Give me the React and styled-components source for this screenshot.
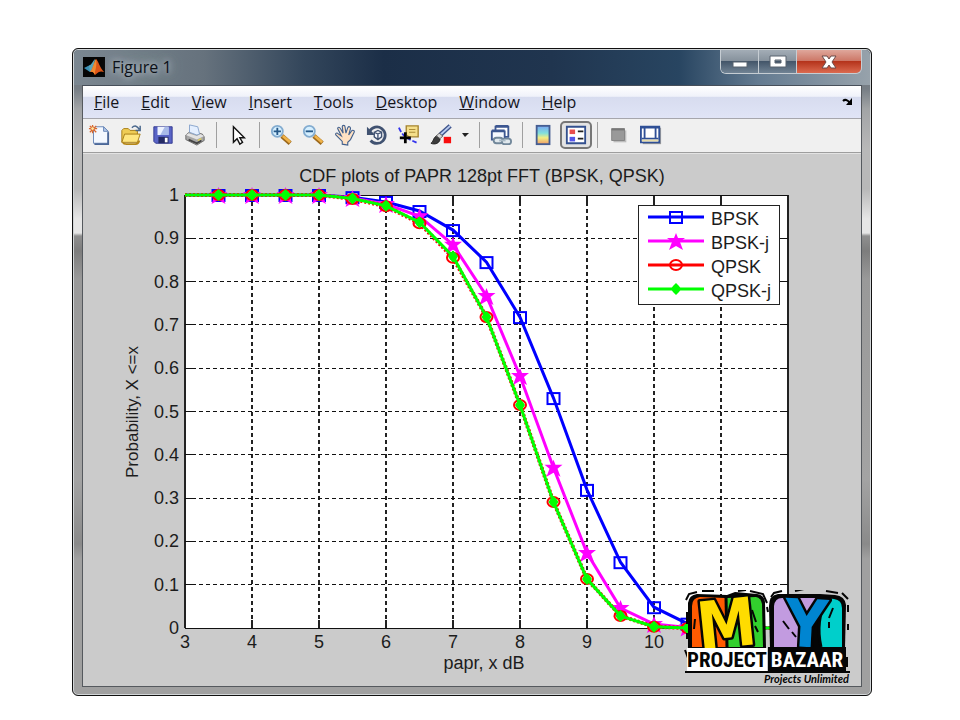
import styled, { createGlobalStyle, css } from "styled-components";

const GlobalStyle = createGlobalStyle`
  * {
    box-sizing: border-box;
  }

  body {
    margin: 0;
    background: #fff;
    font-family: "Open Sans", "Noto Sans", sans-serif;
  }
`;

const Page = styled.main`
  padding: 48px 88px 24px 72px;
`;

const Window = styled.section`
  position: relative;
  padding: 0 9px 8px;
  border: 1px solid #111;
  border-radius: 6px;
  background: linear-gradient(
    to bottom,
    #69757f 0,
    #777e85 40px,
    #a2a4a6 60px,
    #b8b8b8 100px,
    #b8b8b8 140px,
    #e6e6e6 170px,
    #e6e6e6 184px,
    #8f8f8f 187px,
    #7d7d7d 202px,
    #999 230px,
    #a3a3a3 430px,
    #8a8a8a 495px,
    #a0a0a0 510px,
    #a0a0a0 100%
  );
  box-shadow: inset 0 0 0 1px #d2d6d8;
`;

const TitleBar = styled.header`
  display: flex;
  align-items: flex-start;
  height: 35px;
  margin: 1px -8px 0;
  padding: 0 8px;
  border-radius: 5px 5px 0 0;
  background: linear-gradient(
    to right,
    #7b8791 0,
    #66727d 130px,
    #33465b 230px,
    #1b2e47 310px,
    #20354f 60%,
    #284561 76%,
    #647b91 86%,
    #97a2ab 100%
  );
`;

const Title = styled.h1`
  flex: 1;
  display: flex;
  align-items: center;
  gap: 7px;
  margin: 5px 0 0 1px;
  font-size: 16px;
  line-height: 24px;
  font-weight: 400;
  color: #0c1017;

  span {
    text-shadow: 0 0 6px #b9c2ca, 0 0 10px #aab4bc, 0 0 16px #a2acb5;
  }
`;

const Controls = styled.div`
  display: flex;
  height: 24px;
  border: 1px solid #c6cdd3;
  border-top: 0;
  border-radius: 0 0 6px 6px;
  overflow: hidden;
`;

const ControlButton = styled.button`
  display: flex;
  align-items: center;
  justify-content: center;
  width: ${({ $close }) => ($close ? "64px" : "38px")};
  padding: 0;
  border: 0;
  border-right: 1px solid #c6cdd3;
  background: linear-gradient(#a3adb6 0, #87929d 46%, #44566a 50%, #718394 100%);

  ${({ $close }) =>
    $close &&
    css`
      border-right: 0;
      background: linear-gradient(#dfa79b 0, #cd7868 46%, #b5341c 50%, #db6a50 100%);
    `}
`;

const Client = styled.div`
  border: 1px solid #55595e;
  border-top-color: #474f5a;
  background: #cbcbcb;
`;

const MenuBar = styled.nav`
  display: flex;
  align-items: center;
  gap: 22px;
  height: 33px;
  padding: 0 7px 0 11px;
  border-bottom: 1px solid #a6a6ac;
  background: linear-gradient(#fff 0, #f0f2fa 32%, #d7dcef 36%, #e0e4f6 100%);
`;

const MenuButton = styled.button`
  padding: 0;
  border: 0;
  background: none;
  font-family: inherit;
  font-size: 16px;
  line-height: 20px;
  color: #15151c;

  &::first-letter {
    text-decoration: underline;
  }
`;

const DockButton = styled.button`
  display: flex;
  margin-left: auto;
  padding: 0;
  border: 0;
  background: none;
`;

const Toolbar = styled.div`
  display: flex;
  align-items: center;
  height: 34px;
  padding-bottom: 2px;
  border-bottom: 1px solid #9e9e9e;
  background: #f0f0f0;
`;

const ToolButton = styled.button`
  display: flex;
  align-items: center;
  justify-content: center;
  width: ${({ $narrow }) => ($narrow ? "17px" : "32px")};
  height: 28px;
  padding: 0;
  border: 0;
  background: none;

  ${({ $pressed }) =>
    $pressed &&
    css`
      border: 2px solid #777;
      border-radius: 5px;
      background: #e4e4e4;
    `}
`;

const Separator = styled.span`
  width: 1px;
  height: 26px;
  margin: 0 5px;
  background: #a0a0a0;
`;

const Canvas = styled.div`
  position: relative;
  border-top: 1px solid #e3e3e3;
`;

const Chart = styled.svg`
  display: block;
  width: 100%;
  height: auto;
  font-family: "Liberation Sans", Arial, sans-serif;
  font-size: 18px;
  fill: #1c1c1c;
`;

// sits on top of the lower right corner of the plot
const Watermark = styled.svg`
  position: absolute;
  right: 9px;
  bottom: 0;
  width: 168px;
  height: 96px;
`;

const MatlabIcon = () => (
  <svg width="22" height="20" viewBox="0 0 22 20">
    <rect width="22" height="20" fill="#050505" />
    <path d="M1 11l6-3 4 4-4 3z" fill="#3b8fb3" />
    <path d="M6 9c2-1 4-5 6-7l-1 10-4 3z" fill="#5aa4b8" />
    <path d="M13 2c2 1 4 9 8 13-3-1-5-1-9 3-1-3-3-4-5-3 3-3 4-10 6-13z" fill="#dc5518" />
    <path d="M13 2c1 4 0 9-1 13v3c-1-3-3-4-5-3 3-3 4-10 6-13z" fill="#f08a30" />
  </svg>
);

const icons = {
  new: (
    <>
      <path d="M8 3h9l5 5v13H6V7z" fill="#f3f8ff" stroke="#6382b5" />
      <path d="M17 3v5h5z" fill="#b9cbea" stroke="#6382b5" />
      <path d="M22 9v13H7" fill="none" stroke="#4b6798" strokeWidth="2" />
      <path d="M5 1v9M1 5h9M2 2l7 7M9 2L2 9" stroke="#d9672d" strokeWidth="1.4" />
      <circle cx="5" cy="5" r="2" fill="#ffe8a3" stroke="#d9672d" />
    </>
  ),
  open: (
    <>
      <path d="M2 20V7l2-2h5l2 2h8v4" fill="#efcc55" stroke="#a47a13" />
      <path d="M2 20l3-9h17l-3 9z" fill="#ffe680" stroke="#a47a13" />
      <path d="M3 20q1 2 4 2h10q3 0 4-4" fill="none" stroke="#b58717" strokeWidth="2" />
      <path d="M13 4c3-3 6-2 8 2M22 2v5h-5" fill="none" stroke="#49678c" strokeWidth="1.6" />
    </>
  ),
  save: (
    <>
      <path d="M2 3h20v18H4l-2-2z" fill="#5964c6" stroke="#30388e" />
      <path d="M6 3h12v9H6z" fill="#edf2ff" />
      <path d="M14 3h4v9H9z" fill="#a9bae8" />
      <path d="M7 14h11v7H7z" fill="#252b65" />
      <path d="M14 15h3v5h-3z" fill="#fff" />
    </>
  ),
  print: (
    <>
      <path d="M2 12l5-4 13 3 2 3v4l-8 5-12-6z" fill="#a6a6a6" stroke="#696969" />
      <path d="M2 12l12 5 8-4-4-2-4 2-9-3z" fill="#e2e2e2" />
      <path d="M6 1l9 2 2 8-3 1-8-3z" fill="#e4efff" stroke="#86a2ca" />
      <path d="M5 17l9 4 5-3" fill="none" stroke="#444" strokeWidth="2" />
      <path d="M15 18l4-2" stroke="#e3d35a" strokeWidth="1.5" />
    </>
  ),
  pointer: (
    <path
      d="M7 3v17l4-4 3 6 3-2-3-5h5z"
      fill="#fff"
      stroke="#111"
      strokeWidth="1.5"
    />
  ),
  zoomIn: (
    <>
      <path d="M13 13l9 8" stroke="#9c681b" strokeWidth="5" />
      <path d="M14 13l8 7" stroke="#f0b349" strokeWidth="3" />
      <circle cx="8" cy="8" r="6" fill="#d5efff" stroke="#83acd0" strokeWidth="2" />
      <path d="M4 8h8M8 4v8" stroke="#255888" strokeWidth="2" />
    </>
  ),
  zoomOut: (
    <>
      <path d="M13 13l9 8" stroke="#9c681b" strokeWidth="5" />
      <path d="M14 13l8 7" stroke="#f0b349" strokeWidth="3" />
      <circle cx="8" cy="8" r="6" fill="#d5efff" stroke="#83acd0" strokeWidth="2" />
      <path d="M4 8h8" stroke="#255888" strokeWidth="2" />
    </>
  ),
  pan: (
    <path
      d="M9 22v-3L2 12c-1-2 1-3 3-1l3 2-4-8c0-2 2-2 3 0l3 5-1-7c0-2 3-2 3 0l1 7 2-6c1-2 3-1 3 1l-2 7 3-4c1-2 4-1 3 1l-4 8-3 3v3z"
      fill="#ffe1c2"
      stroke="#41608d"
      strokeWidth="1.2"
    />
  ),
  rotate: (
    <>
      <path d="M4 8a9 9 0 1 1 1 10" fill="none" stroke="#405271" strokeWidth="3" />
      <path d="M1 3v9h9z" fill="#405271" />
      <path d="M9 9l4-2 4 2v5l-4 3-4-3zM9 9l4 2 4-2M13 11v6" fill="#f5f8ff" stroke="#405271" strokeWidth="1.5" />
    </>
  ),
  datatip: (
    <>
      <path d="M1 4q2 5 5 8t9 6l7 3" fill="none" stroke="#3434ed" strokeWidth="2" strokeDasharray="5 2" />
      <path d="M9 2h13v12H12l-3-2z" fill="#f5df8a" stroke="#a58431" strokeWidth="1.5" />
      <path d="M12 6h7M12 9h7" stroke="#a58431" />
      <path d="M8 9v12M2 15h12" stroke="#000" strokeWidth="3" />
    </>
  ),
  brush: (
    <>
      <path d="M22 2L11 12" stroke="#3e538a" strokeWidth="5" />
      <path d="M22 2L11 12" stroke="#b9cbef" strokeWidth="2" />
      <path d="M1 21c3-1 2-6 6-8l4 3c0 5-6 7-10 5z" fill="#3c3c3c" stroke="#222" />
      <path d="M7 13l3-3 4 3-3 3z" fill="#d8d8d8" stroke="#555" />
      <path d="M15 14h8v7h-8z" fill="#f80d0d" />
    </>
  ),
  link: (
    <>
      <path d="M6 3h14v11H6z" fill="#fff" stroke="#3d5791" strokeWidth="2" />
      <path d="M2 8h14v9H2z" fill="#f5f8ff" stroke="#3d5791" strokeWidth="2" />
      <path d="M2 7h14M6 2h14" stroke="#3d5791" strokeWidth="2" />
      <rect x="4" y="15" width="10" height="6" rx="3" fill="#e1e9ee" stroke="#71879a" strokeWidth="2" />
      <rect x="13" y="16" width="10" height="6" rx="3" fill="#e1e9ee" stroke="#71879a" strokeWidth="2" />
      <path d="M10 18h7" stroke="#a9bac6" strokeWidth="2" />
    </>
  ),
  colorbar: (
    <>
      <defs>
        <linearGradient id="spectrum" x2="0" y2="1">
          <stop offset="0" stopColor="#79a5f3" />
          <stop offset=".4" stopColor="#81e0dc" />
          <stop offset=".65" stopColor="#f3ee82" />
          <stop offset="1" stopColor="#ef9b68" />
        </linearGradient>
      </defs>
      <rect x="4" y="2" width="14" height="20" fill="url(#spectrum)" stroke="#455d91" strokeWidth="2" />
    </>
  ),
  legend: (
    <>
      <path d="M2 3h20v18H2z" fill="#fff" stroke="#33508f" strokeWidth="2" />
      <path d="M5 6h6v5H5z" fill="#e84e4e" />
      <path d="M5 14h6v5H5z" fill="#5555e8" />
      <path d="M14 8h6M14 16h6" stroke="#222" strokeWidth="2" />
    </>
  ),
  hideTools: (
    <>
      <path d="M6 7h14v13H6z" fill="#bdbdbd" />
      <path d="M4 5h14v13H4z" fill="#999" stroke="#828282" />
      <path d="M4 6h14" stroke="#777" strokeWidth="2" />
    </>
  ),
  showTools: (
    <>
      <path d="M3 4h20v18H3z" fill="#9b9b9b" />
      <path d="M1 3h20v17H1z" fill="#fff" stroke="#2f4f96" strokeWidth="2" />
      <path d="M1 4h20M5 5v11M17 5v11M2 16h18" stroke="#2f4f96" strokeWidth="2" />
      <path d="M2 18h18" stroke="#e8dca8" strokeWidth="2" />
    </>
  ),
};

const ToolIcon = ({ name }) => (
  <svg width="22" height="22" viewBox="0 0 24 24">
    {icons[name]}
  </svg>
);

const menus = ["File", "Edit", "View", "Insert", "Tools", "Desktop", "Window", "Help"];

// groups are divided by a separator
const toolGroups = [
  [
    ["new", "New Figure"],
    ["open", "Open File"],
    ["save", "Save Figure"],
    ["print", "Print Figure"],
  ],
  [["pointer", "Edit Plot"]],
  [
    ["zoomIn", "Zoom In"],
    ["zoomOut", "Zoom Out"],
    ["pan", "Pan"],
    ["rotate", "Rotate 3D"],
    ["datatip", "Data Cursor"],
    ["brush", "Brush"],
  ],
  [["link", "Link Plot"]],
  [
    ["colorbar", "Insert Colorbar"],
    ["legend", "Insert Legend"],
  ],
  [
    ["hideTools", "Hide Plot Tools"],
    ["showTools", "Show Plot Tools"],
  ],
];

// plot area inside the 778 x 532 canvas
const LEFT = 102;
const TOP = 41;
const RIGHT = 705;
const BOTTOM = 474;

const toX = (v) => LEFT + ((v - 3) * (RIGHT - LEFT)) / 9;
const toY = (v) => BOTTOM - v * (BOTTOM - TOP);

const series = [
  {
    name: "BPSK",
    color: "#0000ff",
    marker: "square",
    values: [1, 1, 1, 1, 1, 0.995, 0.984, 0.963, 0.919, 0.845, 0.718, 0.531, 0.319, 0.152, 0.048, 0.01, 0.002, 0, 0],
  },
  {
    name: "BPSK-j",
    color: "#ff00ff",
    marker: "star",
    values: [1, 1, 1, 1, 1, 0.993, 0.979, 0.951, 0.885, 0.767, 0.582, 0.37, 0.173, 0.046, 0.009, 0.001, 0, 0, 0],
  },
  {
    name: "QPSK",
    color: "#ff0000",
    marker: "circle",
    values: [1, 1, 1, 1, 1, 0.991, 0.974, 0.935, 0.855, 0.718, 0.515, 0.291, 0.113, 0.028, 0.003, 0, 0, 0, 0],
  },
  {
    name: "QPSK-j",
    color: "#00ff00",
    marker: "diamond",
    values: [1, 1, 1, 1, 1, 0.992, 0.975, 0.937, 0.858, 0.718, 0.515, 0.291, 0.113, 0.028, 0.003, 0, 0, 0, 0],
  },
];

const Marker = ({ type, x, y, color }) => {
  if (type === "square") {
    return <rect x={x - 6} y={y - 5} width="12" height="11" fill="none" stroke={color} strokeWidth="2" />;
  }
  if (type === "circle") {
    return <ellipse cx={x} cy={y} rx="6" ry="5" fill="none" stroke={color} strokeWidth="2" />;
  }
  if (type === "star") {
    return (
      <path
        d={`M${x} ${y - 8}l2 5h7l-5 4 3 8-7-4-7 4 3-8-5-4h7z`}
        fill={color}
      />
    );
  }
  return <path d={`M${x} ${y - 6}l3 3 2 3-2 3-3 3-3-3-2-3 2-3z`} fill={color} />;
};

const Plot = () => {
  const xTicks = [3, 4, 5, 6, 7, 8, 9, 10, 11, 12];
  const yTicks = [0, 0.1, 0.2, 0.3, 0.4, 0.5, 0.6, 0.7, 0.8, 0.9, 1];

  return (
    <Chart viewBox="0 0 778 532" role="img" aria-label="CDF plots of PAPR">
      <text x="399" y="28" textAnchor="middle">
        CDF plots of PAPR 128pt FFT (BPSK, QPSK)
      </text>
      <rect x={LEFT} y={TOP} width={RIGHT - LEFT} height={BOTTOM - TOP} fill="#fff" />

      {/* Grid */}
      <g stroke="#222" strokeWidth="2" strokeDasharray="4 3" shapeRendering="crispEdges">
        {xTicks.slice(1, -1).map((t) => (
          <path key={t} d={`M${toX(t)} ${TOP}V${BOTTOM}`} />
        ))}
      </g>
      <g stroke="#111" strokeWidth="1" strokeDasharray="4 3" shapeRendering="crispEdges">
        {yTicks.slice(1, -1).map((t) => (
          <path key={t} d={`M${LEFT} ${toY(t)}H${RIGHT}`} />
        ))}
      </g>

      {/* Box and tick marks */}
      <g fill="none" stroke="#222" strokeWidth="2" shapeRendering="crispEdges">
        <path d={`M${LEFT} ${TOP}V${BOTTOM}M${RIGHT} ${TOP}V${BOTTOM}`} />
        {xTicks.map((t) => (
          <path key={t} d={`M${toX(t)} ${TOP}v8M${toX(t)} ${BOTTOM}v-8`} />
        ))}
      </g>
      <g fill="none" stroke="#111" strokeWidth="1" shapeRendering="crispEdges">
        <path d={`M${LEFT} ${TOP}H${RIGHT}M${LEFT} ${BOTTOM}H${RIGHT}`} />
        {yTicks.map((t) => (
          <path key={t} d={`M${LEFT} ${toY(t)}h7M${RIGHT} ${toY(t)}h-7`} />
        ))}
      </g>

      {xTicks.map((t) => (
        <text key={t} x={toX(t)} y="494" textAnchor="middle">
          {t}
        </text>
      ))}
      {yTicks.map((t) => (
        <text key={t} x="96" y={toY(t) + 6} textAnchor="end">
          {t}
        </text>
      ))}
      <text x="401" y="515" textAnchor="middle">
        papr, x dB
      </text>
      <text transform="translate(55 258) rotate(-90)" textAnchor="middle" fontSize="17">
        {"Probability, X <=x"}
      </text>

      {/* Curves */}
      {series.map(({ name, color, marker, values }) => (
        <g key={name}>
          <polyline
            points={values.map((v, i) => `${toX(3 + i / 2)},${toY(v)}`).join(" ")}
            fill="none"
            stroke={color}
            strokeWidth={marker === "circle" ? 4 : 3}
            strokeDasharray={marker === "circle" ? "2 2" : "none"}
          />
          {values.slice(1).map((v, i) => (
            <Marker key={i} type={marker} color={color} x={toX(3.5 + i / 2)} y={toY(v)} />
          ))}
        </g>
      ))}

      {/* Legend */}
      <rect x="555" y="51" width="141" height="99" fill="#fff" stroke="#222" strokeWidth="1" shapeRendering="crispEdges" />
      {series.map(({ name, color, marker }, i) => (
        <g key={name}>
          <path d={`M565 ${63 + i * 24}h56`} stroke={color} strokeWidth="3" />
          <Marker type={marker} color={color} x={593} y={63 + i * 24} />
          <text x="628" y={71 + i * 24}>
            {name}
          </text>
        </g>
      ))}
    </Chart>
  );
};

const BazaarLogo = () => (
  <Watermark viewBox="0 0 168 96" role="img" aria-label="My Project Bazaar">
    {/* M block */}
    <path d="M4 58V13q1-8 9-9l30 1 8-3 22 2q7 1 8 8l1 46z" fill="#050505" />
    <path d="M8 57V16q0-8 8-9l25 1 2 49z" fill="#ff5a00" />
    <path d="M43 57V8l29-1q5 1 6 7l1 43z" fill="#32d02d" />
    <path d="M42 7l1 50" stroke="#050505" strokeWidth="3" />
    {/* Y block */}
    <path d="M86 58l-1-42q0-11 9-12h42l15 1q10 1 11 10l-1 43z" fill="#050505" />
    <path d="M90 57V16q1-8 8-8h34l-8 49z" fill="#c29be0" />
    <path d="M142 8l8 1q8 1 8 9v39h-21q-6-23 5-49z" fill="#00cfcb" />
    <path d="M143 7q-12 24-6 50" stroke="#050505" strokeWidth="3" fill="none" />
    <g
      fontFamily='"DejaVu Sans Condensed", "DejaVu Sans", sans-serif'
      fontWeight="700"
      fontSize="66"
      textAnchor="middle"
      stroke="#050505"
      strokeWidth="5"
      strokeLinejoin="round"
      paintOrder="stroke"
    >
      <text transform="translate(45 57) rotate(-6)" fill="#ffdc00">
        M
      </text>
      <text transform="translate(121 57) rotate(3)" fill="#0085d1">
        Y
      </text>
    </g>
    {/* Scratches */}
    <g fill="none" stroke="#050505" strokeWidth="2">
      <path d="M2 10l3-6 8-2M18 1h12M54 1l8-1M66 1l13 3 4 9M83 17l1 5M87 7l3-4 8-2M111 1l9-2M142 1l12 2M158 3l6 6M164 15v7M164 34v6M3 22v12M3 43v6M68 20l4 12M71 36l3 6M99 31l6 8M108 42l4 5M149 18l-4 10M145 32v6M11 29l-1 10M163 67v10M1 60l3 8" />
    </g>
    {/* Name banner */}
    <path d="M3 58h80v23H3z" fill="#fff" />
    <path d="M84 57h78v24H84z" fill="#050505" />
    <path d="M1 82h165" stroke="#050505" strokeWidth="2" />
    <g
      fontFamily='"Liberation Sans Narrow", "Roboto Condensed", "Open Sans Condensed", "DejaVu Sans Condensed", sans-serif'
      fontWeight="700"
      fontSize="21"
      textAnchor="middle"
    >
      <text x="43" y="77" fill="#050505">
        PROJECT
      </text>
      <text x="123" y="77" fill="#fff">
        BAZAAR
      </text>
    </g>
    <text x="165" y="93" textAnchor="end" fontFamily="Lato, sans-serif" fontStyle="italic" fontWeight="700" fontSize="11" fill="#050505">
      Projects Unlimited
    </text>
  </Watermark>
);

const App = () => (
  <Page>
    <GlobalStyle />
    <Window>
      <TitleBar>
        <Title>
          <MatlabIcon />
          <span>Figure 1</span>
        </Title>
        <Controls>
          <ControlButton aria-label="Minimize">
            <svg width="16" height="12">
              <rect x="1" y="6" width="14" height="5" fill="#fff" stroke="#58636e" />
            </svg>
          </ControlButton>
          <ControlButton aria-label="Maximize">
            <svg width="18" height="13">
              <path d="M1 1h16v11H1zM6 5v3h6V5z" fill="#fff" stroke="#58636e" fillRule="evenodd" />
            </svg>
          </ControlButton>
          <ControlButton $close aria-label="Close">
            <svg width="18" height="14">
              <path d="M2 1h5l2 3 2-3h5l-4 6 4 6h-5l-2-3-2 3H2l4-6z" fill="#fff" stroke="#6c4a48" />
            </svg>
          </ControlButton>
        </Controls>
      </TitleBar>

      <Client>
        <MenuBar>
          {menus.map((menu) => (
            <MenuButton key={menu}>{menu}</MenuButton>
          ))}
          <DockButton aria-label="Dock Figure">
            <svg width="12" height="8">
              <path d="M1 3q3-3 7 2" fill="none" stroke="#000" strokeWidth="2" />
              <path d="M10 0v7H4z" fill="#000" />
            </svg>
          </DockButton>
        </MenuBar>

        <Toolbar>
          {toolGroups.map((group, i) => [
            i > 0 && <Separator key={`sep-${i}`} />,
            ...group.map(([name, label]) => (
              <ToolButton key={name} aria-label={label} $pressed={name === "legend"}>
                <ToolIcon name={name} />
              </ToolButton>
            )),
            i === 2 && (
              <ToolButton key="brush-menu" $narrow aria-label="Brush options">
                <svg width="7" height="4">
                  <path d="M0 0h7L3 4z" fill="#222" />
                </svg>
              </ToolButton>
            ),
          ])}
        </Toolbar>

        <Canvas>
          <Plot />
          <BazaarLogo />
        </Canvas>
      </Client>
    </Window>
  </Page>
);

export default App;
